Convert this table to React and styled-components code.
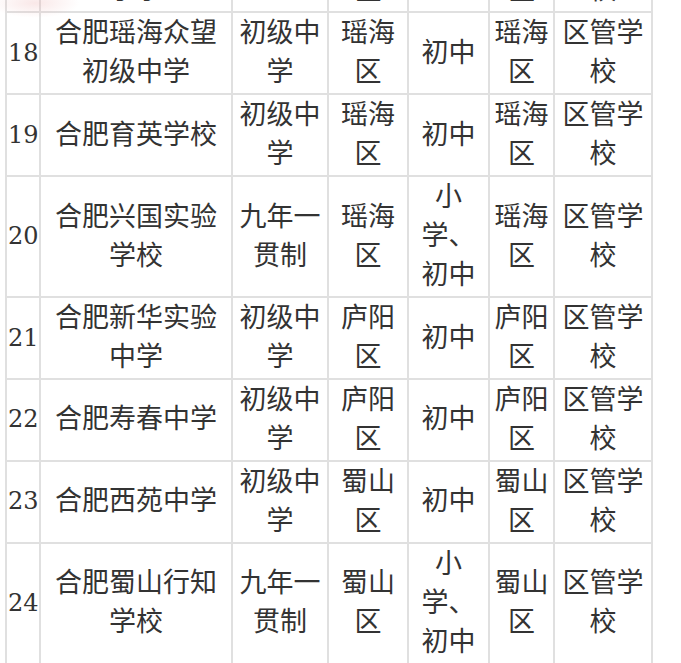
import React from "react";
import styled, { createGlobalStyle } from "styled-components";

const Global = createGlobalStyle`
  html, body { margin: 0; padding: 0; background: #fff; }
  body { overflow: hidden; }
`;

const Page = styled.div`
  position: relative;
  width: 681px;
  height: 663px;
  overflow: hidden;
  background: #fff;
`;

const Table = styled.table`
  border-collapse: collapse;
  table-layout: fixed;
  width: 648px;
  margin: -70.5px 0 0 5px;
  font-family: "Liberation Serif", "Noto Sans CJK SC", serif;
  font-size: 27px;
  line-height: 38.95px;
  color: #333;
  line-break: strict;
`;

const Cell = styled.td`
  border: 2px solid #e0e0e0;
  padding: ${(p) => (p.$num ? "1px 0 1px 1px" : "1px 3px")};
  text-align: ${(p) => (p.$num ? "left" : "center")};
  vertical-align: middle;
  font-family: ${(p) =>
    p.$num ? '"DejaVu Serif", serif' : '"Liberation Serif", "Noto Sans CJK SC", serif'};
  font-size: ${(p) => (p.$num ? "24px" : "27px")};
  white-space: ${(p) => (p.$num ? "nowrap" : "normal")};
`;

const Glow = styled.div`
  position: absolute;
  left: -10px;
  top: -12px;
  width: 90px;
  height: 30px;
  background: radial-gradient(ellipse at center, rgba(235, 170, 170, 0.28), rgba(255, 255, 255, 0) 70%);
  pointer-events: none;
`;

const widths = [34, 192, 96, 80, 81, 65, 98];

const rows = [
  ["17", "合肥瑶海实验小学", "小学", "瑶海区", "小学", "瑶海区", "区管学校"],
  ["18", "合肥瑶海众望初级中学", "初级中学", "瑶海区", "初中", "瑶海区", "区管学校"],
  ["19", "合肥育英学校", "初级中学", "瑶海区", "初中", "瑶海区", "区管学校"],
  ["20", "合肥兴国实验学校", "九年一贯制", "瑶海区", "小学、初中", "瑶海区", "区管学校"],
  ["21", "合肥新华实验中学", "初级中学", "庐阳区", "初中", "庐阳区", "区管学校"],
  ["22", "合肥寿春中学", "初级中学", "庐阳区", "初中", "庐阳区", "区管学校"],
  ["23", "合肥西苑中学", "初级中学", "蜀山区", "初中", "蜀山区", "区管学校"],
  ["24", "合肥蜀山行知学校", "九年一贯制", "蜀山区", "小学、初中", "蜀山区", "区管学校"],
];

export default function App() {
  return (
    <Page>
      <Global />
      <Table>
        <colgroup>
          {widths.map((w, i) => (
            <col key={i} style={{ width: w }} />
          ))}
        </colgroup>
        <tbody>
          {rows.map((r) => (
            <tr key={r[0]}>
              {r.map((c, i) => (
                <Cell key={i} $num={i === 0}>
                  {c}
                </Cell>
              ))}
            </tr>
          ))}
        </tbody>
      </Table>
      <Glow />
    </Page>
  );
}
